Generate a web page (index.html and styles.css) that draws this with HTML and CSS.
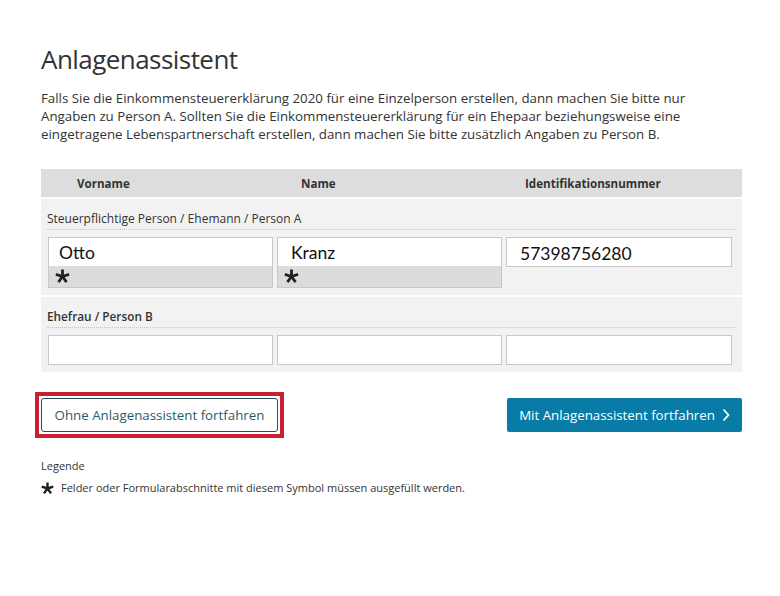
FILE: index.html
```html
<!DOCTYPE html>
<html lang="de">

<head>
  <meta charset="UTF-8">
  <title>Anlagenassistent</title>
  <link rel="stylesheet" href="styles.css">
</head>

<body>
  <main class="page">
    <!-- Titel und Hinweistext -->
    <h1>Anlagenassistent</h1>
    <p class="intro">
      Falls Sie die Einkommensteuererklärung 2020 für eine Einzelperson erstellen, dann machen Sie bitte nur
      Angaben zu Person A. Sollten Sie die Einkommensteuererklärung für ein Ehepaar beziehungsweise eine
      eingetragene Lebenspartnerschaft erstellen, dann machen Sie bitte zusätzlich Angaben zu Person B.
    </p>

    <!-- Personentabelle -->
    <div class="persons">
      <div class="persons-head">
        <div class="head-first">Vorname</div>
        <div class="head-name">Name</div>
        <div class="head-id">Identifikationsnummer</div>
      </div>

      <div class="person-row">
        <div class="person-label">Steuerpflichtige Person / Ehemann / Person A</div>
        <div class="person-fields">
          <div class="field field-required">
            <input class="input-first" type="text" value="Otto">
            <div class="required-bar">
              <svg class="star" viewBox="0 0 14 14"><path d="M7 7V0.5M7 7L13.2 5M7 7L10.8 12.3M7 7L3.2 12.3M7 7L0.8 5" /></svg>
            </div>
          </div>
          <div class="field field-required">
            <input type="text" value="Kranz">
            <div class="required-bar">
              <svg class="star" viewBox="0 0 14 14"><path d="M7 7V0.5M7 7L13.2 5M7 7L10.8 12.3M7 7L3.2 12.3M7 7L0.8 5" /></svg>
            </div>
          </div>
          <div class="field">
            <input class="input-id" type="text" value="57398756280">
          </div>
        </div>
      </div>

      <div class="person-row person-b">
        <div class="person-label label-strong">Ehefrau / Person B</div>
        <div class="person-fields">
          <div class="field"><input class="input-b" type="text"></div>
          <div class="field"><input class="input-b" type="text"></div>
          <div class="field"><input class="input-b" type="text"></div>
        </div>
      </div>
    </div>

    <!-- Weiter-Buttons -->
    <div class="actions">
      <div class="highlight">
        <button class="btn-outline">Ohne Anlagenassistent fortfahren</button>
      </div>
      <button class="btn-primary">
        Mit Anlagenassistent fortfahren
        <svg class="chevron" viewBox="0 0 8 14"><polyline points="1.5,1.5 6.5,7 1.5,12.5" /></svg>
      </button>
    </div>

    <!-- Legende -->
    <div class="legend">
      <div class="legend-title">Legende</div>
      <div class="legend-item">
        <svg class="star star-legend" viewBox="0 0 14 14"><path d="M7 7V0.5M7 7L13.2 5M7 7L10.8 12.3M7 7L3.2 12.3M7 7L0.8 5" /></svg>
        Felder oder Formularabschnitte mit diesem Symbol müssen ausgefüllt werden.
      </div>
    </div>
  </main>
</body>

</html>
```

FILE: styles.css
```css
/* Grundlayout */
html,
body {
  margin: 0;
  padding: 0;
  background-color: white;
  color: #333;
  font-family: "Open Sans", "Liberation Sans", sans-serif;
}

.page {
  width: 701px;
  margin-left: 41px;
  padding-top: 42px;
}

h1 {
  margin: 0;
  font-size: 26px;
  font-weight: normal;
  line-height: 34px;
  letter-spacing: -0.55px;
}

.intro {
  max-width: 660px;
  margin: 13px 0 0;
  font-size: 13.3px;
  line-height: 18px;
}

/* Tabelle */
.persons {
  margin-top: 26px;
  display: flex;
  flex-direction: column;
  gap: 2px;
}

.persons-head {
  display: flex;
  height: 28px;
  align-items: center;
  background-color: #dddddd;
  font-size: 11.6px;
  font-weight: bold;
}

.head-first {
  padding-left: 36px;
  width: 188px;
}

.head-name {
  padding-left: 36px;
  width: 188px;
}

.head-id {
  padding-left: 36px;
}

.person-row {
  background-color: #f2f2f2;
  padding-bottom: 7px;
}

.person-label {
  margin: 0 7px 0 6px;
  padding: 12px 0 3px;
  font-size: 12px;
  line-height: 15px;
  border-bottom: 1px dotted #c4c4c4;
}

.label-strong {
  font-weight: 600;
  font-size: 11.8px;
}

.person-fields {
  display: grid;
  grid-template-columns: 225px 225px 226px;
  column-gap: 4px;
  padding-left: 7px;
  margin-top: 7px;
  align-items: start;
}

.field input {
  box-sizing: border-box;
  width: 100%;
  height: 29px;
  margin: 0;
  padding: 0 13px;
  border: 1px solid #c8c8c8;
  background-color: white;
  font-family: Lato, "Liberation Sans", sans-serif;
  font-size: 17.5px;
  color: #111;
  outline: none;
}

.field .input-first {
  padding-left: 10px;
}

.field .input-id {
  height: 30px;
  padding-top: 3px;
}

.field .input-b {
  height: 30px;
}

.field-required input {
  border-bottom: none;
}

.required-bar {
  height: 22px;
  box-sizing: border-box;
  border: 1px solid #c8c8c8;
  border-top: none;
  background-color: #dcdcdc;
  display: flex;
  align-items: center;
  padding-left: 6px;
}

.star {
  width: 15px;
  height: 15px;
  fill: none;
  stroke: #222;
  stroke-width: 2.6;
}

/* Buttons */
.actions {
  display: flex;
  justify-content: space-between;
  margin-top: 26px;
}

/* 赤枠の強調表示 */
.highlight {
  position: relative;
}

.highlight::after {
  content: "";
  position: absolute;
  top: -6px;
  left: -6px;
  right: -6px;
  bottom: -6px;
  border: 4px solid #c9202f;
  pointer-events: none;
}

.btn-outline {
  display: block;
  height: 34px;
  width: 237px;
  border: 1px solid #2c4a55;
  border-radius: 3px;
  background-color: white;
  color: #1d5d6d;
  font-family: "Open Sans", "Liberation Sans", sans-serif;
  font-size: 13.3px;
}

.btn-primary {
  height: 34px;
  width: 235px;
  border: none;
  border-radius: 2px;
  background-color: #087ba6;
  color: white;
  font-family: "Open Sans", "Liberation Sans", sans-serif;
  font-size: 13.3px;
  display: flex;
  align-items: center;
  justify-content: center;
  gap: 7px;
}

.chevron {
  width: 8px;
  height: 14px;
  fill: none;
  stroke: white;
  stroke-width: 1.8;
}

/* Legende */
.legend {
  margin-top: 26px;
  font-size: 11px;
  line-height: 16px;
}

.legend-item {
  margin-top: 6px;
  display: flex;
  align-items: center;
  gap: 7px;
}

.star-legend {
  width: 13px;
  height: 13px;
}
```
